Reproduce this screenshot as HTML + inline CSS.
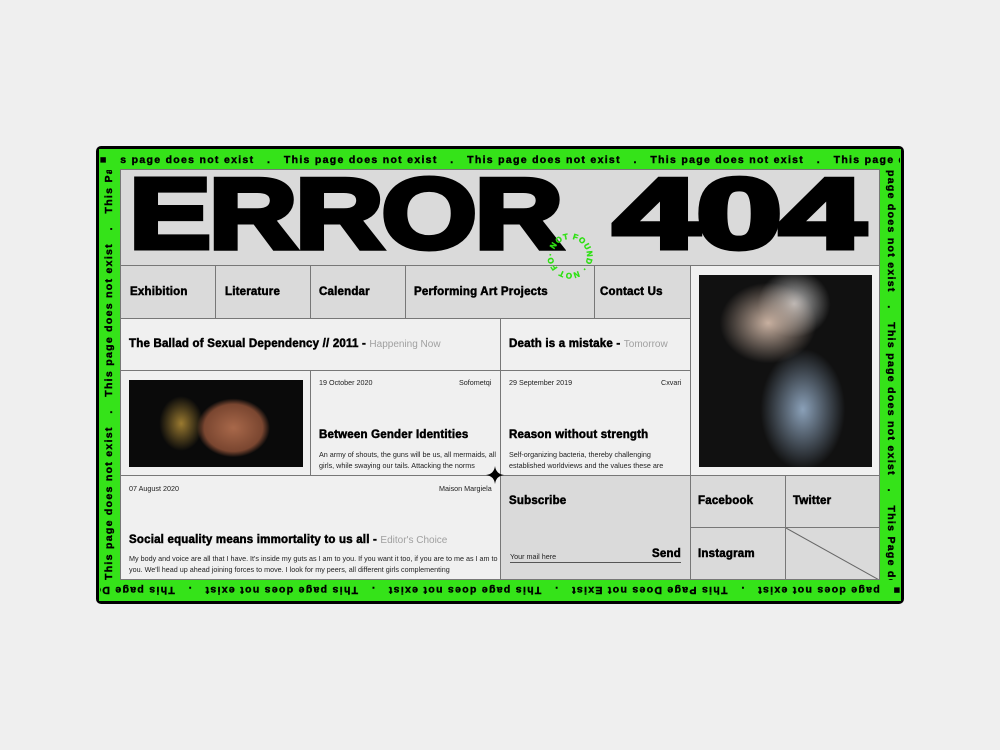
<!DOCTYPE html>
<html><head><style>
*{margin:0;padding:0;box-sizing:border-box}
body{width:1000px;height:750px;background:#efefef;position:relative;overflow:hidden;font-family:"Liberation Sans",sans-serif}
.frame{position:absolute;left:96px;top:146px;width:808px;height:458px;background:#000;border-radius:5px}
.green{position:absolute;left:99px;top:149px;width:802px;height:452px;background:#35e319}
.tick{position:absolute;font-weight:bold;font-size:10.5px;line-height:14px;height:14px;color:#000;white-space:nowrap;letter-spacing:1.3px;-webkit-text-stroke:.4px #000;overflow:hidden}
.content{position:absolute;left:120px;top:169px;width:760px;height:411px;background:#f0f0f0;border:1px solid #777;overflow:hidden}
.c{position:absolute;border-right:1px solid #777;border-bottom:1px solid #777}
.g{background:#dadada}
.h{font-weight:bold;font-size:11.5px;-webkit-text-stroke:.5px #000;letter-spacing:.2px;position:absolute;white-space:nowrap}
.s{font-size:7.2px;color:#222;position:absolute;white-space:nowrap}
.p{font-size:7.2px;color:#222;position:absolute;line-height:11px}
.grey{color:#a0a0a0;font-weight:normal;-webkit-text-stroke:0;font-size:10px;letter-spacing:0}
.big{position:absolute;top:-6px;font-weight:bold;font-size:100px;line-height:100px;height:100px;-webkit-text-stroke:5px #000;color:#000;transform-origin:left top;white-space:nowrap;letter-spacing:-2px}
</style></head><body>
<div class="frame"></div>
<div class="green"></div>
<div class="tick" style="left:100px;top:153px;width:800px;">&#9632;&nbsp;&nbsp;&nbsp;s page does not exist &nbsp;&nbsp;.&nbsp;&nbsp; This page does not exist &nbsp;&nbsp;.&nbsp;&nbsp; This page does not exist &nbsp;&nbsp;.&nbsp;&nbsp; This page does not exist &nbsp;&nbsp;.&nbsp;&nbsp; This page does not exist</div>
<div class="tick" style="left:100px;top:583px;width:800px;transform:rotate(180deg);transform-origin:center;">&#9632;&nbsp;&nbsp; page does not exist &nbsp;&nbsp;.&nbsp;&nbsp; This Page Does not Exist &nbsp;&nbsp;.&nbsp;&nbsp; This page does not exist &nbsp;&nbsp;.&nbsp;&nbsp; This page does not exist &nbsp;&nbsp;.&nbsp;&nbsp; This page Does not exist</div>
<div class="tick" style="left:-96px;top:368px;width:410px;transform:rotate(-90deg);transform-origin:center;">This page does not exist &nbsp;&nbsp;.&nbsp;&nbsp; This page does not exist &nbsp;&nbsp;.&nbsp;&nbsp; This Page does</div>
<div class="tick" style="left:686px;top:368px;width:410px;transform:rotate(90deg);transform-origin:center;">page does not exist &nbsp;&nbsp;.&nbsp;&nbsp; This page does not exist &nbsp;&nbsp;.&nbsp;&nbsp; This Page does</div>

<div class="content">
  <div class="c g" style="left:0;top:0;width:760px;height:96px;border-right:0"></div>
  <div class="big" style="left:8px;transform:scaleX(1.23)">ERROR</div>
  <div class="big" style="left:492px;transform:scaleX(1.55)">404</div>
  <!-- nav -->
  <div class="c g" style="left:0;top:96px;width:95px;height:53px"></div><div class="h" style="left:9px;top:116px">Exhibition</div>
  <div class="c g" style="left:95px;top:96px;width:95px;height:53px"></div><div class="h" style="left:104px;top:116px">Literature</div>
  <div class="c g" style="left:190px;top:96px;width:95px;height:53px"></div><div class="h" style="left:198px;top:116px">Calendar</div>
  <div class="c g" style="left:285px;top:96px;width:189px;height:53px"></div><div class="h" style="left:293px;top:116px">Performing Art Projects</div>
  <div class="c g" style="left:474px;top:96px;width:96px;height:53px"></div><div class="h" style="left:479px;top:116px">Contact Us</div>
  <div class="c" style="left:570px;top:96px;width:190px;height:210px;border-right:0"></div>
  <div style="position:absolute;left:578px;top:105px;width:173px;height:192px;background:radial-gradient(ellipse 40% 30% at 40% 25%,#c8b0a0,transparent 70%),radial-gradient(ellipse 35% 45% at 60% 70%,#8aa0b8,transparent 70%),radial-gradient(ellipse 30% 25% at 55% 15%,#bbb,transparent 70%),#111"></div>
  <!-- row2 -->
  <div class="c" style="left:0;top:149px;width:380px;height:52px"></div>
  <div class="h" style="left:8px;top:168px">The Ballad of Sexual Dependency // 2011 - <span class="grey">Happening Now</span></div>
  <div class="c" style="left:380px;top:149px;width:190px;height:52px"></div>
  <div class="h" style="left:388px;top:168px">Death is a mistake - <span class="grey">Tomorrow</span></div>
  <!-- row3 -->
  <div class="c" style="left:0;top:201px;width:190px;height:105px"></div>
  <div style="position:absolute;left:8px;top:210px;width:174px;height:87px;background:radial-gradient(ellipse 28% 45% at 60% 55%,#a8684a,#7a4630 60%,transparent 75%),radial-gradient(ellipse 18% 45% at 30% 50%,#9a7a30,transparent 70%),#0a0a0a"></div>
  <div class="c" style="left:190px;top:201px;width:190px;height:105px"></div>
  <div class="s" style="left:198px;top:208px">19 October 2020</div><div class="s" style="left:338px;top:208px">Sofometqi</div>
  <div class="h" style="left:198px;top:259px">Between Gender Identities</div>
  <div class="p" style="left:198px;top:279px;width:180px">An army of shouts, the guns will be us, all mermaids, all girls, while swaying our tails. Attacking the norms</div>
  <div class="c" style="left:380px;top:201px;width:190px;height:105px"></div>
  <div class="s" style="left:388px;top:208px">29 September 2019</div><div class="s" style="left:540px;top:208px">Cxvari</div>
  <div class="h" style="left:388px;top:259px">Reason without strength</div>
  <div class="p" style="left:388px;top:279px;width:180px">Self-organizing bacteria, thereby challenging established worldviews and the values these are</div>
  <!-- row4 -->
  <div class="c" style="left:0;top:306px;width:380px;height:105px;border-bottom:0"></div>
  <div class="s" style="left:8px;top:314px">07 August 2020</div><div class="s" style="left:318px;top:314px">Maison Margiela</div>
  <div class="h" style="left:8px;top:364px">Social equality means immortality to us all - <span class="grey">Editor's Choice</span></div>
  <div class="p" style="left:8px;top:383px;width:370px">My body and voice are all that I have. It's inside my guts as I am to you. If you want it too, if you are to me as I am to you. We'll head up ahead joining forces to move. I look for my peers, all different girls complementing</div>
  <div class="c g" style="left:380px;top:306px;width:190px;height:105px;border-bottom:0"></div>
  <div class="h" style="left:388px;top:325px">Subscribe</div>
  <div class="s" style="left:389px;top:382px">Your mail here</div>
  <div class="h" style="left:531px;top:378px">Send</div>
  <div style="position:absolute;left:389px;top:392px;width:171px;height:1px;background:#555"></div>
  <div class="c g" style="left:570px;top:306px;width:95px;height:52px"></div><div class="h" style="left:577px;top:325px">Facebook</div>
  <div class="c g" style="left:665px;top:306px;width:95px;height:52px;border-right:0"></div><div class="h" style="left:672px;top:325px">Twitter</div>
  <div class="c g" style="left:570px;top:358px;width:95px;height:53px;border-bottom:0"></div><div class="h" style="left:577px;top:378px">Instagram</div>
  <div class="c g" style="left:665px;top:358px;width:95px;height:53px;border:0"></div>
  <svg style="position:absolute;left:665px;top:358px" width="95" height="53"><line x1="0" y1="0" x2="95" y2="53" stroke="#666" stroke-width="1"/></svg>
</div>
<svg style="position:absolute;left:486px;top:466px" width="18" height="18"><path d="M9 0 Q10 8 18 9 Q10 10 9 18 Q8 10 0 9 Q8 8 9 0Z" fill="#000"/></svg>
<svg style="position:absolute;left:546px;top:232px" width="48" height="48" viewBox="0 0 48 48">
<defs><path id="cc" d="M24,24 m-17,0 a17,17 0 1,1 34,0 a17,17 0 1,1 -34,0"/></defs>
<text font-family="Liberation Sans" font-weight="bold" font-size="8" fill="#2fe014" stroke="#2fe014" stroke-width=".4" letter-spacing=".8"><textPath href="#cc">· NOT FOUND · NOT FOUND</textPath></text>
</svg>
</body></html>
